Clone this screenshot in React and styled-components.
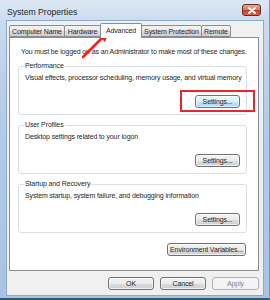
import React from 'react';
import styled, { createGlobalStyle } from 'styled-components';

const GlobalStyle = createGlobalStyle`
  html, body {
    margin: 0;
    padding: 0;
    background: #ffffff;
  }
  body {
    font-family: "Liberation Sans", Arial, sans-serif;
  }
`;

const App = () => {
  return (
    <>
      <GlobalStyle />
      <Window>
        <TitleBar>
          <span>System Properties</span>
          <CloseBtn>
            <svg width='8' height='7' viewBox='0 0 8 7'>
              <path d='M1 1 L7 6 M7 1 L1 6' stroke='#ffffff' strokeWidth='1.8' strokeLinecap='round' />
            </svg>
          </CloseBtn>
        </TitleBar>
        <Client>
          <TabRow>
            <Tab $w={56}>Computer Name</Tab>
            <Tab $w={37}>Hardware</Tab>
            <Tab $w={42} $active>Advanced</Tab>
            <Tab $w={61}>System Protection</Tab>
            <Tab $w={30}>Remote</Tab>
          </TabRow>
          <Panel>
            <Notice>You must be logged on as an Administrator to make most of these changes.</Notice>
            <Group $first>
              <legend>Performance</legend>
              <Desc>Visual effects, processor scheduling, memory usage, and virtual memory</Desc>
              <Highlight>
                <Button $focus>Settings...</Button>
              </Highlight>
            </Group>
            <Group>
              <legend>User Profiles</legend>
              <Desc>Desktop settings related to your logon</Desc>
              <Button>Settings...</Button>
            </Group>
            <Group>
              <legend>Startup and Recovery</legend>
              <Desc>System startup, system failure, and debugging information</Desc>
              <Button>Settings...</Button>
            </Group>
            <EnvRow>
              <Button $w={79}>Environment Variables...</Button>
            </EnvRow>
          </Panel>
          <Footer>
            <Button $w={46}>OK</Button>
            <Button $w={46}>Cancel</Button>
            <Button $w={47} $disabled>Apply</Button>
          </Footer>
        </Client>
        <Arrow width='36' height='34' viewBox='0 0 36 34'>
          <path d='M3 30 L22 11' stroke='#ec2227' strokeWidth='2.6' strokeLinecap='round' />
          <polygon points='30,3 18,8 25,15' fill='#ec2227' />
        </Arrow>
      </Window>
    </>
  );
};

export default App;

const Window = styled.div`
  position: relative;
  width: 270px;
  height: 300px;
  box-sizing: border-box;
  display: flex;
  flex-direction: column;
  background: linear-gradient(180deg, #dde8f4 0px, #c9dbee 22px, #b3cbe6 120px, #a8c4e4 300px);
  border-bottom: 2px solid #2e5873;
  border-right: 1px solid #7c9bbb;
`;

const TitleBar = styled.div`
  height: 20px;
  display: flex;
  align-items: center;
  justify-content: space-between;
  padding: 3px 7px 0 7px;
  box-sizing: border-box;
  font-size: 8.6px;
  color: #1e1e1e;
`;

const CloseBtn = styled.div`
  width: 19px;
  height: 12px;
  margin-top: -3px;
  margin-right: 1px;
  box-sizing: border-box;
  border: 1px solid #6d2b20;
  border-radius: 3px;
  display: flex;
  align-items: center;
  justify-content: center;
  background: linear-gradient(180deg, #e8a89b 0%, #d77968 45%, #c2412c 55%, #d8664e 100%);
`;

const Client = styled.div`
  flex: 1;
  margin: 0 5px 2px 6px;
  padding: 3px 4px 0 2px;
  background: #f0f0f0;
  border: 1px solid #8ea9c6;
  display: flex;
  flex-direction: column;
  font-size: 7px;
  letter-spacing: -0.12px;
  color: #1e1e1e;
`;

const TabRow = styled.div`
  display: flex;
  align-items: flex-end;
  height: 13px;
  padding-left: 1px;
  position: relative;
  z-index: 1;
`;

const Tab = styled.div`
  width: ${(p) => p.$w}px;
  height: ${(p) => (p.$active ? 15 : 12)}px;
  margin-left: -1px;
  margin-bottom: ${(p) => (p.$active ? -1 : 0)}px;
  box-sizing: border-box;
  border: 1px solid #898c95;
  border-bottom: ${(p) => (p.$active ? 'none' : '1px solid #898c95')};
  border-radius: 2px 2px 0 0;
  background: ${(p) => (p.$active ? '#ffffff' : 'linear-gradient(180deg, #f2f2f2 0%, #ebebeb 50%, #dddddd 51%, #cfcfcf 100%)')};
  display: flex;
  align-items: center;
  justify-content: center;
  white-space: nowrap;
  overflow: hidden;
  padding-bottom: ${(p) => (p.$active ? 2 : 0)}px;
`;

const Panel = styled.div`
  height: 234px;
  box-sizing: border-box;
  background: #ffffff;
  border: 1px solid #898c95;
  padding: 9px 11px 0 8px;
  display: flex;
  flex-direction: column;
`;

const Notice = styled.div`
  line-height: 10px;
  margin-left: 3px;
  white-space: nowrap;
`;

const Group = styled.fieldset`
  margin: ${(p) => (p.$first ? 4 : 5)}px 0 0 0;
  padding: 0 6px 6px 6px;
  border: 1px solid #d5dfe5;
  border-radius: 3px;
  display: flex;
  flex-direction: column;
  min-width: 0;
  legend {
    padding: 0 1px;
    margin-left: -1px;
    line-height: 10px;
  }
`;

const Desc = styled.div`
  line-height: 10px;
  margin-top: 2px;
  margin-bottom: 12px;
  white-space: nowrap;
`;

const Highlight = styled.div`
  position: relative;
  align-self: flex-end;
  &::after {
    content: '';
    position: absolute;
    left: -15px;
    right: -15px;
    top: -5px;
    bottom: -4px;
    border: 2px solid #e8262d;
  }
`;

const Button = styled.div`
  width: ${(p) => p.$w || 45}px;
  height: 13px;
  box-sizing: border-box;
  align-self: flex-end;
  border: 1px solid ${(p) => (p.$focus ? '#3c7fb1' : p.$disabled ? '#adb2b5' : '#707070')};
  border-radius: 3px;
  background: ${(p) =>
    p.$focus
      ? 'linear-gradient(180deg, #eaf6fd 0%, #d9f0fc 50%, #bee6fd 51%, #a7d9f5 100%)'
      : p.$disabled
      ? '#f4f4f4'
      : 'linear-gradient(180deg, #f2f2f2 0%, #ebebeb 50%, #dddddd 51%, #cfcfcf 100%)'};
  box-shadow: inset 0 0 0 1px ${(p) => (p.$disabled ? '#f4f4f4' : 'rgba(255,255,255,0.7)')};
  color: ${(p) => (p.$disabled ? '#838383' : '#1e1e1e')};
  display: flex;
  align-items: center;
  justify-content: center;
  white-space: nowrap;
`;

const EnvRow = styled.div`
  display: flex;
  justify-content: flex-end;
  margin-top: 10px;
  padding-right: 1px;
`;

const Footer = styled.div`
  display: flex;
  justify-content: flex-end;
  gap: 6px;
  margin-top: 6px;
`;

const Arrow = styled.svg`
  position: absolute;
  left: 80px;
  top: 27px;
`;
